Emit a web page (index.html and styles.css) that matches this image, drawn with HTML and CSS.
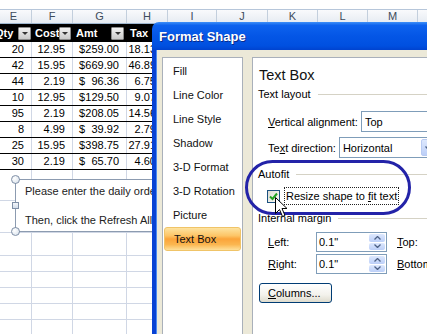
FILE: index.html
```html
<!DOCTYPE html>
<html>
<head>
<meta charset="utf-8">
<link rel="stylesheet" href="styles.css">
</head>
<body>
<div class="sheet">
  <div class="fbar"></div>
  <div class="colheads">
    <div class="ch w-e">E</div><div class="ch w-f">F</div><div class="ch w-g">G</div><div class="ch w-h">H</div><div class="ch w-i">I</div><div class="ch w-j">J</div><div class="ch w-k">K</div><div class="ch w-l">L</div><div class="ch w-m">M</div><div class="ch w-n">N</div>
  </div>
  <div class="row thead">
    <div class="cell w-e"><span class="hl">Qty</span><span class="dd"></span></div>
    <div class="cell w-f"><span class="hl">Cost</span><span class="dd"></span></div>
    <div class="cell w-g"><span class="hl">Amt</span><span class="dd"></span></div>
    <div class="cell w-h"><span class="hl">Tax</span></div>
  </div>
  <div class="row data"><div class="cell w-e num">20</div><div class="cell w-f num">12.95</div><div class="cell w-g acct"><span>$</span><span>259.00</span></div><div class="cell w-h num tax">18.13</div></div>
  <div class="row data"><div class="cell w-e num">42</div><div class="cell w-f num">15.95</div><div class="cell w-g acct"><span>$</span><span>669.90</span></div><div class="cell w-h num tax">46.89</div></div>
  <div class="row data"><div class="cell w-e num">44</div><div class="cell w-f num">2.19</div><div class="cell w-g acct"><span>$</span><span>96.36</span></div><div class="cell w-h num tax">6.75</div></div>
  <div class="row data"><div class="cell w-e num">10</div><div class="cell w-f num">12.95</div><div class="cell w-g acct"><span>$</span><span>129.50</span></div><div class="cell w-h num tax">9.07</div></div>
  <div class="row data"><div class="cell w-e num">95</div><div class="cell w-f num">2.19</div><div class="cell w-g acct"><span>$</span><span>208.05</span></div><div class="cell w-h num tax">14.56</div></div>
  <div class="row data"><div class="cell w-e num">8</div><div class="cell w-f num">4.99</div><div class="cell w-g acct"><span>$</span><span>39.92</span></div><div class="cell w-h num tax">2.79</div></div>
  <div class="row data"><div class="cell w-e num">25</div><div class="cell w-f num">15.95</div><div class="cell w-g acct"><span>$</span><span>398.75</span></div><div class="cell w-h num tax">27.91</div></div>
  <div class="row data"><div class="cell w-e num">30</div><div class="cell w-f num">2.19</div><div class="cell w-g acct"><span>$</span><span>65.70</span></div><div class="cell w-h num tax">4.60</div></div>
  <div class="row empty tall1"><div class="cell w-e"></div><div class="cell w-f"></div><div class="cell w-g"></div><div class="cell w-h"></div></div>
  <div class="row empty tall2"><div class="cell w-e"></div><div class="cell w-f"></div><div class="cell w-g"></div><div class="cell w-h"></div></div>
  <div class="row empty tall3"><div class="cell w-e"></div><div class="cell w-f"></div><div class="cell w-g"></div><div class="cell w-h"></div></div>
  <div class="row empty"><div class="cell w-e"></div><div class="cell w-f"></div><div class="cell w-g"></div><div class="cell w-h"></div></div>
  <div class="row empty"><div class="cell w-e"></div><div class="cell w-f"></div><div class="cell w-g"></div><div class="cell w-h"></div></div>
  <div class="row empty"><div class="cell w-e"></div><div class="cell w-f"></div><div class="cell w-g"></div><div class="cell w-h"></div></div>
  <div class="row empty"><div class="cell w-e"></div><div class="cell w-f"></div><div class="cell w-g"></div><div class="cell w-h"></div></div>
  <div class="row empty"><div class="cell w-e"></div><div class="cell w-f"></div><div class="cell w-g"></div><div class="cell w-h"></div></div>
</div>

<div class="textbox">
  <p>Please enter the daily order quantities.</p>
  <p class="gap">Then, click the Refresh All button.</p>
  <span class="hnd circ tl"></span>
  <span class="hnd sq ml"></span>
  <span class="hnd circ bl"></span>
</div>

<div class="dialog">
  <div class="titlebar">Format Shape</div>
  <div class="dbody">
    <div class="nav">
      <div class="nav-item">Fill</div>
      <div class="nav-item">Line Color</div>
      <div class="nav-item">Line Style</div>
      <div class="nav-item">Shadow</div>
      <div class="nav-item">3-D Format</div>
      <div class="nav-item">3-D Rotation</div>
      <div class="nav-item">Picture</div>
      <div class="nav-item sel">Text Box</div>
    </div>
    <div class="pane">
      <div class="pane-title">Text Box</div>
      <div class="sect s-layout"><span>Text layout</span></div>
      <div class="frow r-va">
        <span class="lbl"><u>V</u>ertical alignment:</span>
        <span class="field f-va">Top</span>
      </div>
      <div class="frow r-td">
        <span class="lbl">Te<u>x</u>t direction:</span>
        <span class="field f-td">Horizontal<span class="ddbtn"><svg width="7" height="4" viewBox="0 0 7 4"><path d="M0.5 0.5 L3.5 3.5 L6.5 0.5" fill="none" stroke="#4d6185" stroke-width="1.3"/></svg></span></span>
      </div>
      <div class="sect s-autofit"><span>Autofit</span></div>
      <div class="frow r-chk">
        <span class="chk"><svg width="9" height="9" viewBox="0 0 9 9"><path d="M1 4.5 L3.5 7 L8 1.5" fill="none" stroke="#21a121" stroke-width="2"/></svg></span>
        <span class="chk-lbl">Resize shape to <u>f</u>it text</span>
      </div>
      <div class="sect s-margin"><span>Internal margin</span></div>
      <div class="frow r-spin">
        <span class="lbl lbl-m"><u>L</u>eft:</span>
        <span class="spin">0.1"<span class="spbtns"><span class="sp up"><svg width="7" height="4" viewBox="0 0 7 4"><path d="M0.5 3.5 L3.5 0.5 L6.5 3.5" fill="none" stroke="#4d6185" stroke-width="1.3"/></svg></span><span class="sp dn"><svg width="7" height="4" viewBox="0 0 7 4"><path d="M0.5 0.5 L3.5 3.5 L6.5 0.5" fill="none" stroke="#4d6185" stroke-width="1.3"/></svg></span></span></span>
        <span class="lbl lbl-r"><u>T</u>op:</span>
      </div>
      <div class="frow r-spin r-spin2">
        <span class="lbl lbl-m"><u>R</u>ight:</span>
        <span class="spin">0.1"<span class="spbtns"><span class="sp up"><svg width="7" height="4" viewBox="0 0 7 4"><path d="M0.5 3.5 L3.5 0.5 L6.5 3.5" fill="none" stroke="#4d6185" stroke-width="1.3"/></svg></span><span class="sp dn"><svg width="7" height="4" viewBox="0 0 7 4"><path d="M0.5 0.5 L3.5 3.5 L6.5 0.5" fill="none" stroke="#4d6185" stroke-width="1.3"/></svg></span></span></span>
        <span class="lbl lbl-r"><u>B</u>ottom:</span>
      </div>
      <div class="btn"><u>C</u>olumns...</div>
    </div>
  </div>
</div>

<div class="ring"></div>
<svg class="cursor" width="13" height="21" viewBox="0 0 13 21"><path d="M0.5 0.5 L0.5 16.5 L4.5 12.5 L7.5 19.5 L10 18.5 L7 11.5 L12 11.5 Z" fill="#fff" stroke="#000" stroke-width="1" stroke-linejoin="miter"/></svg>
</body>
</html>
```

FILE: styles.css
```css
html, body { margin: 0; padding: 0; }
body {
  width: 427px; height: 334px; overflow: hidden; position: relative;
  background: #fff;
  font-family: "Liberation Sans", Arial, sans-serif;
  font-size: 11px; color: #000;
}

/* ---------- spreadsheet ---------- */
.sheet { margin-left: -4px; }
.fbar { height: 9px; border-bottom: 1px solid #b6c6da; background: #fff; }
.colheads {
  display: flex; height: 13px;
  border-bottom: 1px solid #9eb6ce;
  background: linear-gradient(#f9fafc, #e6ebf2);
}
.ch {
  flex: none; box-sizing: border-box; border-right: 1px solid #c3cfdd;
  text-align: center; font-size: 11px; line-height: 13px; color: #3d4b5c;
}
.w-e { width: 36px; } .w-f { width: 41px; } .w-g { width: 54px; } .w-h { width: 41px; }
.w-i { width: 49px; } .w-j { width: 51px; } .w-k { width: 50px; } .w-l { width: 50px; }
.w-m { width: 50px; } .w-n { width: 50px; }

.row { display: flex; }
.cell {
  flex: none; box-sizing: border-box; border-right: 1px solid #d0d7e5;
  white-space: nowrap; overflow: hidden;
}
.thead { height: 18px; background: #000; }
.thead .cell {
  border-right: none; color: #fff; font-weight: bold; font-size: 11px;
  display: flex; align-items: center; justify-content: space-between;
  padding: 0 2px 0 3px;
}
.thead .w-e { padding-left: 2px; padding-right: 1px; }
.thead .w-e .hl { margin-left: -3px; }
.thead .w-g { padding-right: 3px; }
.dd {
  width: 13px; height: 13px; box-sizing: border-box;
  border: 1px solid #8a8a8a; border-radius: 1px;
  background: linear-gradient(#f2f2f2, #c9c9c9);
  display: flex; align-items: center; justify-content: center;
}
.dd::after {
  content: ""; width: 0; height: 0;
  border-left: 3px solid transparent; border-right: 3px solid transparent;
  border-top: 3px solid #333;
}
.data { height: 16px; border-bottom: 1px solid #000; box-sizing: border-box; }
.data .cell { line-height: 15px; }
.num { text-align: right; padding-right: 7px; }
.tax { padding-right: 11px; }
.acct { display: flex; justify-content: space-between; padding: 0 7px 0 6px; }
.empty { height: 16px; border-bottom: 1px solid #d0d7e5; box-sizing: border-box; }
.empty.tall1 { height: 31px; }
.empty.tall2 { height: 32px; }
.empty.tall3 { height: 23px; }

/* ---------- text box shape ---------- */
.textbox {
  position: absolute; left: 15px; top: 179px; width: 220px; height: 53px;
  box-sizing: border-box; border: 1px solid #8c9bb0; background: #fff;
  padding: 4px 0 0 9px; font-size: 11px; line-height: 14.5px; color: #222;
}
.textbox p { margin: 0; white-space: nowrap; }
.textbox .gap { margin-top: 14.5px; }
.hnd { position: absolute; box-sizing: border-box; border: 1px solid #7f8fa6; }
.circ { width: 9px; height: 9px; border-radius: 50%; background: radial-gradient(circle at 35% 35%, #ffffff, #d5dfea); }
.sq { width: 7px; height: 7px; background: linear-gradient(#f3f6fa, #d3ddea); }
.tl { left: -5px; top: -5px; }
.bl { left: -5px; bottom: -5px; }
.ml { left: -4px; top: 22px; }

/* ---------- dialog ---------- */
.dialog {
  position: absolute; left: 152px; top: 22px; width: 300px; height: 330px;
  display: flex; flex-direction: column;
}
.titlebar {
  flex: none; height: 28px; border-radius: 7px 7px 0 0;
  background: linear-gradient(#3d8ff8 0%, #0d62ee 12%, #0456e6 50%, #0050e0 85%, #0043cf 100%);
  color: #fff; font-weight: bold; font-size: 13px; line-height: 29px;
  padding-left: 7px; text-shadow: 1px 1px 0 #0a2a8a;
}
.dbody {
  flex: 1; display: flex; gap: 9px; align-items: flex-start;
  background: #ece9d8;
  border-left: 4px solid #0842d4;
  box-shadow: inset 1px 0 0 #4b8af2;
  padding: 7px 0 0 6px;
}
.nav {
  flex: none; width: 81px; height: 290px; box-sizing: border-box;
  border: 1px solid #a9b0ba; background: #fff; padding-top: 1px;
}
.nav-item { height: 24px; line-height: 24px; padding-left: 10px; color: #111; }
.nav-item.sel {
  box-sizing: border-box; margin: 0 1px; padding-left: 9px;
  border: 1px solid #f0c468; border-radius: 3px; line-height: 22px;
  background: linear-gradient(#fde3a0 0%, #fdc567 35%, #fba43a 50%, #fbb650 75%, #fee09a 100%);
}
.pane {
  flex: none; width: 220px; height: 290px; box-sizing: border-box;
  border: 1px solid #a9b0ba; background: #fff; padding-left: 5px;
}
.pane-title { margin-top: 7px; height: 20px; line-height: 20px; font-size: 14.5px; padding-left: 1px; color: #111; }
.sect { display: flex; align-items: center; height: 14px; line-height: 14px; }
.sect::after { content: ""; flex: 1; height: 0; border-top: 1px solid #d5d2c5; margin-left: 7px; }
.s-layout { margin-top: 2px; }
.s-autofit { margin-top: 9px; }
.s-margin { margin-top: 6px; }
.frow { display: flex; align-items: center; padding-left: 10px; }
.lbl { white-space: nowrap; }
u { text-decoration: underline; text-underline-offset: 1px; }
.field {
  box-sizing: border-box; height: 21px; border: 1px solid #7f9db9; background: #fff;
  display: flex; align-items: center; padding-left: 3px; white-space: nowrap;
}
.r-va { margin-top: 10px; height: 21px; }
.f-va { margin-left: 3px; width: 90px; }
.r-td { margin-top: 5px; height: 21px; }
.f-td { margin-left: 3px; width: 100px; position: relative; }
.ddbtn {
  position: absolute; right: 1px; top: 1px; bottom: 1px; width: 16px;
  background: linear-gradient(#dde8fd, #bccff8); border: 1px solid #b9cbf3; box-sizing: border-box;
  border-radius: 2px; display: flex; align-items: center; justify-content: center;
}
.r-chk { margin-top: 6px; height: 18px; padding-left: 9px; }
.chk {
  width: 13px; height: 13px; box-sizing: border-box; border: 1px solid #1c5180;
  background: linear-gradient(135deg, #dcdcd3, #fbfbf8);
  display: flex; align-items: center; justify-content: center;
}
.chk-lbl { margin-left: 4px; padding: 1px 1px; border: 1px dotted #222; line-height: 14px; white-space: nowrap; }
.r-spin { margin-top: 7px; height: 20px; }
.r-spin2 { margin-top: 2px; }
.lbl-m { width: 48px; }
.spin {
  box-sizing: border-box; width: 71px; height: 20px; border: 1px solid #7f9db9; background: #fff;
  display: flex; align-items: center; padding-left: 2px; position: relative;
}
.spbtns {
  position: absolute; right: 1px; top: 1px; bottom: 1px; width: 16px;
  display: flex; flex-direction: column; gap: 1px;
}
.sp {
  flex: 1; background: linear-gradient(#dde8fd, #bccff8); border-radius: 2px;
  display: flex; align-items: center; justify-content: center;
}
.lbl-r { margin-left: 10px; }
.btn {
  margin: 9px 0 0 1px; box-sizing: border-box; width: 73px; height: 20px;
  border: 1px solid #003c74; border-radius: 3px;
  background: linear-gradient(#ffffff, #f3f2ec 60%, #dedbcd);
  line-height: 18px; padding-left: 8px;
}

/* ---------- annotations ---------- */
.ring {
  position: absolute; left: 245px; top: 160px; width: 166px; height: 55px;
  box-sizing: border-box; border: 3px solid #2323a8; border-radius: 28px;
}
.cursor { position: absolute; left: 275px; top: 197px; }
```
